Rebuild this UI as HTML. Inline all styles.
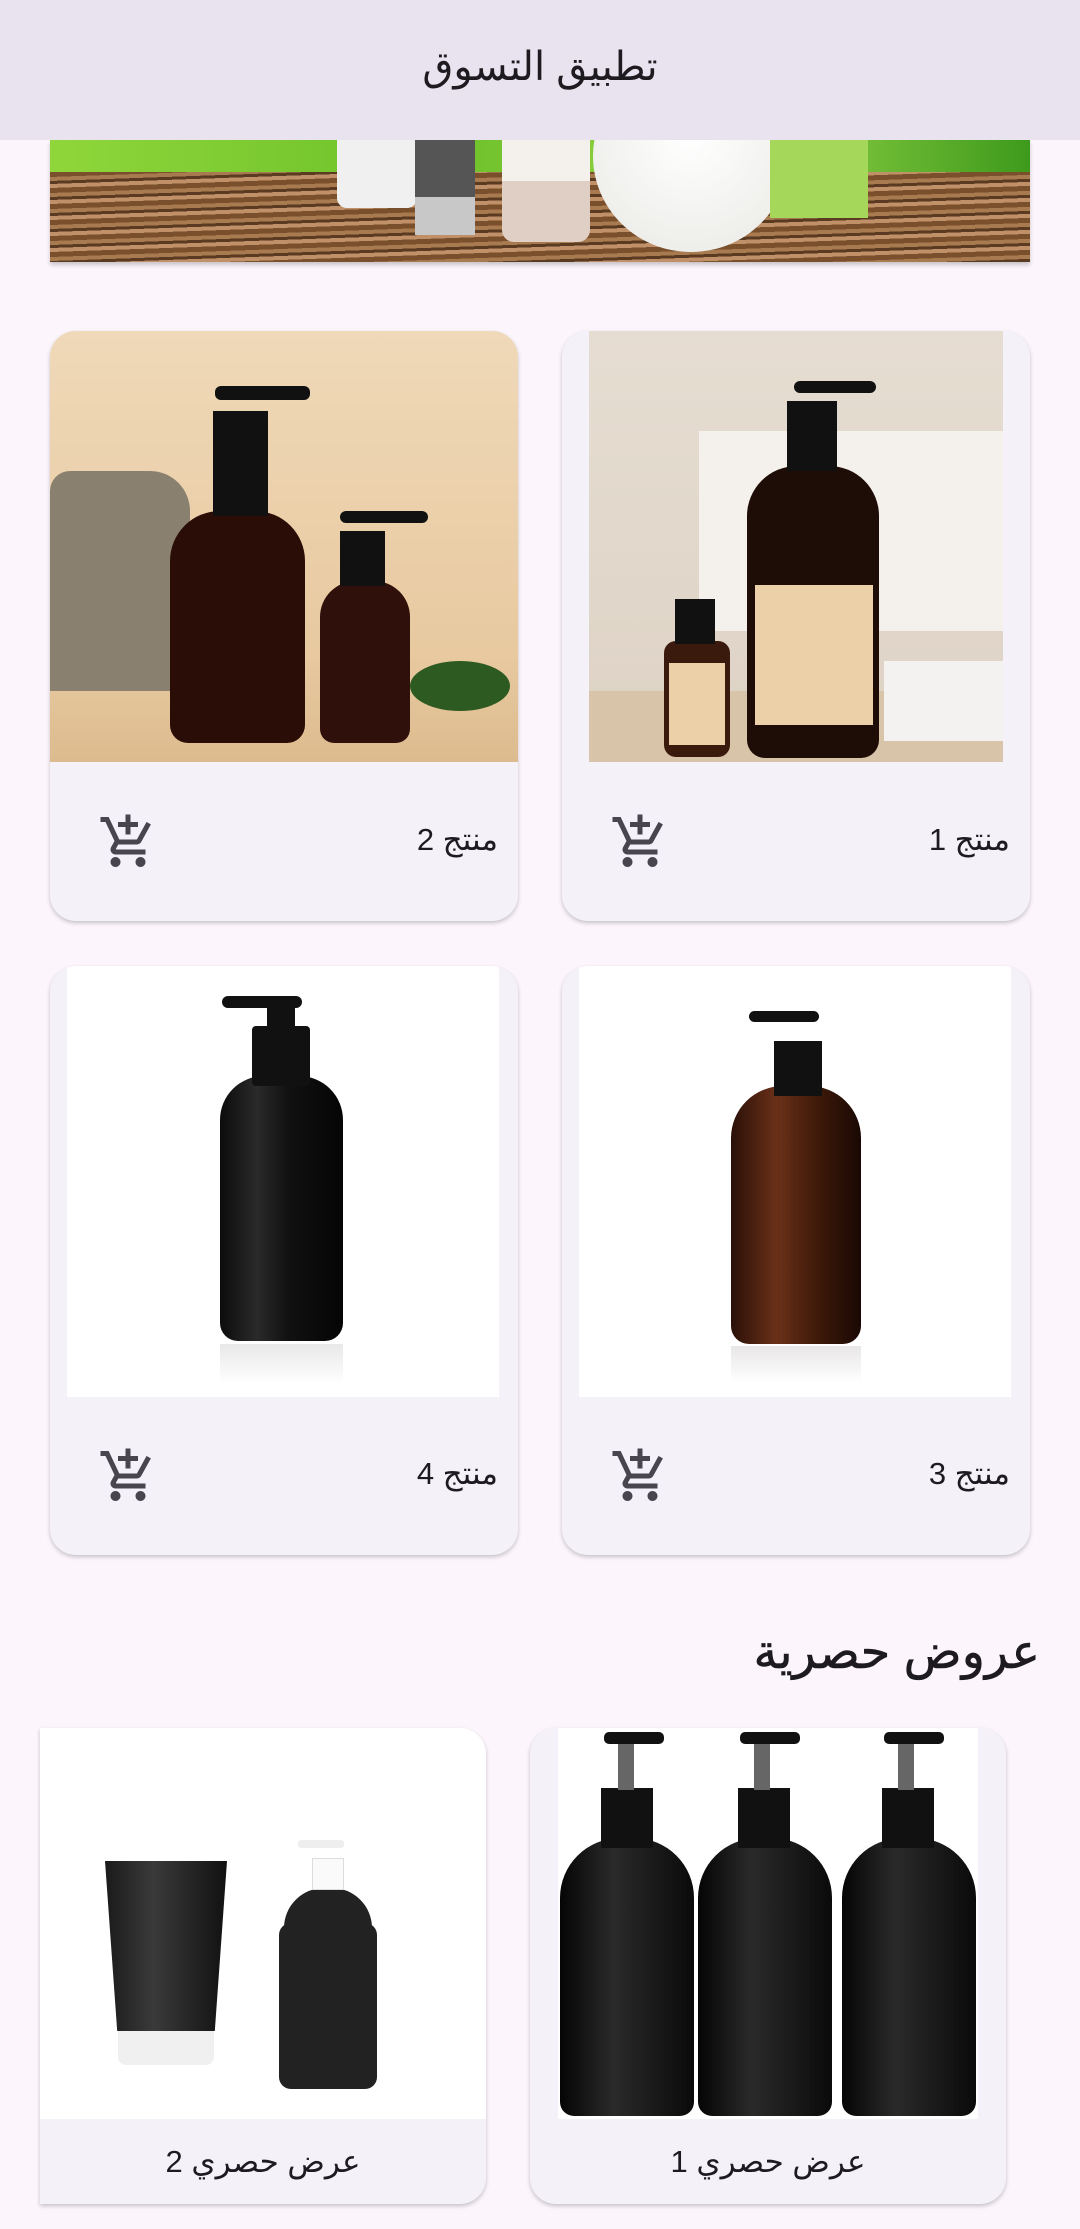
<!DOCTYPE html>
<html><head><meta charset="utf-8"><style>
*{margin:0;padding:0;box-sizing:border-box}
body{width:1080px;height:2229px;background:#fcf6fc;font-family:"Liberation Sans","DejaVu Sans",sans-serif;position:relative;overflow:hidden;color:#1d1b20}
.abs{position:absolute}
.hdr{left:0;top:0;width:1080px;height:140px;background:#e8e3ef;z-index:3}
.hdr span{position:absolute;left:0;right:0;top:44px;text-align:center;font-size:40px}
.card{background:#f4f1f8;border-radius:26px;box-shadow:0 2px 4px rgba(0,0,0,.22);overflow:hidden}
.lbl{font-size:31px;direction:rtl}
</style></head><body>
<div class="abs hdr"><span>تطبيق التسوق</span></div>
<!-- banner -->
<div class="abs" style="left:50px;top:140px;width:980px;height:122px;overflow:hidden;box-shadow:0 3px 4px rgba(0,0,0,.2)">
 <div class="abs" style="left:0;top:0;width:980px;height:32px;background:linear-gradient(90deg,#8fd63a,#6cc02a 40%,#9bd84a 70%,#3e9a1c)"></div>
 <div class="abs" style="left:0;top:32px;width:980px;height:90px;background:repeating-linear-gradient(178deg,#7a4f2c 0 5px,#a87a50 5px 9px,#5a3a20 9px 12px,#c09068 12px 16px)"></div>
 <div class="abs" style="left:287px;top:0;width:80px;height:68px;background:#f0f0f0;border-radius:0 0 10px 10px"></div>
 <div class="abs" style="left:365px;top:0;width:60px;height:95px;background:linear-gradient(#555 60%,#c8c8c8 60%)"></div>
 <div class="abs" style="left:452px;top:0;width:88px;height:102px;background:linear-gradient(#f4f0ec 40%,#e0cfc4 40%);border-radius:0 0 12px 12px"></div>
 <div class="abs" style="left:543px;top:-80px;width:196px;height:192px;background:radial-gradient(circle at 50% 40%,#fff,#e8e8e4);border-radius:50%"></div>
 <div class="abs" style="left:720px;top:0;width:98px;height:78px;background:#a5d85a"></div>
</div>
<!-- row1 -->
<div class="abs card" style="left:50px;top:331px;width:468px;height:590px">
 <div class="abs" style="left:0;top:0;width:468px;height:431px;background:linear-gradient(#efd9b8,#e8c9a0 75%,#dcbb8e)">
  <div class="abs" style="left:0;top:140px;width:140px;height:220px;background:#8a8070;border-radius:20px 40px 0 0"></div>
  <div class="abs" style="left:120px;top:180px;width:135px;height:232px;background:#2a0d06;border-radius:50px 50px 18px 18px"></div>
  <div class="abs" style="left:163px;top:80px;width:55px;height:105px;background:#111"></div>
  <div class="abs" style="left:165px;top:55px;width:95px;height:14px;background:#111;border-radius:6px"></div>
  <div class="abs" style="left:270px;top:250px;width:90px;height:162px;background:#30100a;border-radius:36px 36px 14px 14px"></div>
  <div class="abs" style="left:290px;top:200px;width:45px;height:55px;background:#111"></div>
  <div class="abs" style="left:290px;top:180px;width:88px;height:12px;background:#111;border-radius:6px"></div>
  <div class="abs" style="left:360px;top:330px;width:100px;height:50px;background:#2d5a20;border-radius:50%"></div>
 </div>
 <div class="abs lbl" style="right:20px;top:491px">منتج 2</div>
 <svg class="abs" style="left:48px;top:481px" width="60" height="60" viewBox="0 0 24 24"><path fill="#49454f" d="M11 9h2V6h3V4h-3V1h-2v3H8v2h3v3zm-4 9c-1.1 0-1.99.9-1.99 2S5.9 22 7 22s2-.9 2-2-.9-2-2-2zm10 0c-1.1 0-1.99.9-1.99 2s.89 2 1.99 2 2-.9 2-2-.9-2-2-2zm-9.83-3.25l.03-.12.9-1.63h7.45c.75 0 1.41-.41 1.75-1.03l3.86-7.01L19.42 4h-.01l-1.1 2-2.76 5H8.53l-.13-.27L6.16 6l-.95-2-.94-2H1v2h2l3.6 7.59-1.35 2.45c-.16.28-.25.61-.25.96 0 1.1.9 2 2 2h12v-2H7.42c-.13 0-.25-.11-.25-.25z"/></svg>
</div>
<div class="abs card" style="left:562px;top:331px;width:468px;height:590px">
 <div class="abs" style="left:27px;top:0;width:414px;height:431px;background:linear-gradient(#e6ddd2,#ddd2c4)">
  <div class="abs" style="left:110px;top:100px;width:304px;height:200px;background:#f4f0ec"></div>
  <div class="abs" style="left:0;top:360px;width:414px;height:71px;background:#d8c4a8"></div>
  <div class="abs" style="left:295px;top:330px;width:119px;height:80px;background:#f4f2f0"></div>
  <div class="abs" style="left:158px;top:135px;width:132px;height:292px;background:#1e0c06;border-radius:50px 50px 18px 18px"></div>
  <div class="abs" style="left:166px;top:254px;width:118px;height:140px;background:#ecd1a8"></div>
  <div class="abs" style="left:198px;top:70px;width:50px;height:70px;background:#111"></div>
  <div class="abs" style="left:205px;top:50px;width:82px;height:12px;background:#111;border-radius:6px"></div>
  <div class="abs" style="left:75px;top:310px;width:66px;height:116px;background:#3a1a0c;border-radius:12px"></div>
  <div class="abs" style="left:80px;top:332px;width:56px;height:82px;background:#ecd1a8"></div>
  <div class="abs" style="left:86px;top:268px;width:40px;height:45px;background:#111"></div>
 </div>
 <div class="abs lbl" style="right:20px;top:491px">منتج 1</div>
 <svg class="abs" style="left:48px;top:481px" width="60" height="60" viewBox="0 0 24 24"><path fill="#49454f" d="M11 9h2V6h3V4h-3V1h-2v3H8v2h3v3zm-4 9c-1.1 0-1.99.9-1.99 2S5.9 22 7 22s2-.9 2-2-.9-2-2-2zm10 0c-1.1 0-1.99.9-1.99 2s.89 2 1.99 2 2-.9 2-2-.9-2-2-2zm-9.83-3.25l.03-.12.9-1.63h7.45c.75 0 1.41-.41 1.75-1.03l3.86-7.01L19.42 4h-.01l-1.1 2-2.76 5H8.53l-.13-.27L6.16 6l-.95-2-.94-2H1v2h2l3.6 7.59-1.35 2.45c-.16.28-.25.61-.25.96 0 1.1.9 2 2 2h12v-2H7.42c-.13 0-.25-.11-.25-.25z"/></svg>
</div>
<!-- row2 -->
<div class="abs card" style="left:50px;top:966px;width:468px;height:589px">
 <div class="abs" style="left:17px;top:0;width:432px;height:431px;background:#fff">
  <div class="abs" style="left:153px;top:110px;width:123px;height:265px;background:linear-gradient(90deg,#0c0c0c,#2a2a2a 30%,#111 55%,#050505);border-radius:44px 44px 18px 18px"></div>
  <div class="abs" style="left:185px;top:60px;width:58px;height:60px;background:#111;border-radius:4px"></div>
  <div class="abs" style="left:200px;top:35px;width:28px;height:30px;background:#111"></div>
  <div class="abs" style="left:155px;top:30px;width:80px;height:12px;background:#111;border-radius:6px"></div>
  <div class="abs" style="left:153px;top:378px;width:123px;height:40px;background:linear-gradient(#e8e8e8,#fff)"></div>
 </div>
 <div class="abs lbl" style="right:20px;top:490px">منتج 4</div>
 <svg class="abs" style="left:48px;top:480px" width="60" height="60" viewBox="0 0 24 24"><path fill="#49454f" d="M11 9h2V6h3V4h-3V1h-2v3H8v2h3v3zm-4 9c-1.1 0-1.99.9-1.99 2S5.9 22 7 22s2-.9 2-2-.9-2-2-2zm10 0c-1.1 0-1.99.9-1.99 2s.89 2 1.99 2 2-.9 2-2-.9-2-2-2zm-9.83-3.25l.03-.12.9-1.63h7.45c.75 0 1.41-.41 1.75-1.03l3.86-7.01L19.42 4h-.01l-1.1 2-2.76 5H8.53l-.13-.27L6.16 6l-.95-2-.94-2H1v2h2l3.6 7.59-1.35 2.45c-.16.28-.25.61-.25.96 0 1.1.9 2 2 2h12v-2H7.42c-.13 0-.25-.11-.25-.25z"/></svg>
</div>
<div class="abs card" style="left:562px;top:966px;width:468px;height:589px">
 <div class="abs" style="left:17px;top:0;width:432px;height:431px;background:#fff">
  <div class="abs" style="left:152px;top:120px;width:130px;height:258px;background:linear-gradient(90deg,#2a1008,#6a3018 35%,#3a1808 70%,#1a0804);border-radius:52px 52px 18px 18px"></div>
  <div class="abs" style="left:195px;top:75px;width:48px;height:55px;background:#111"></div>
  <div class="abs" style="left:170px;top:45px;width:70px;height:11px;background:#111;border-radius:6px"></div>
  <div class="abs" style="left:152px;top:380px;width:130px;height:36px;background:linear-gradient(#e8e6e6,#fff)"></div>
 </div>
 <div class="abs lbl" style="right:20px;top:490px">منتج 3</div>
 <svg class="abs" style="left:48px;top:480px" width="60" height="60" viewBox="0 0 24 24"><path fill="#49454f" d="M11 9h2V6h3V4h-3V1h-2v3H8v2h3v3zm-4 9c-1.1 0-1.99.9-1.99 2S5.9 22 7 22s2-.9 2-2-.9-2-2-2zm10 0c-1.1 0-1.99.9-1.99 2s.89 2 1.99 2 2-.9 2-2-.9-2-2-2zm-9.83-3.25l.03-.12.9-1.63h7.45c.75 0 1.41-.41 1.75-1.03l3.86-7.01L19.42 4h-.01l-1.1 2-2.76 5H8.53l-.13-.27L6.16 6l-.95-2-.94-2H1v2h2l3.6 7.59-1.35 2.45c-.16.28-.25.61-.25.96 0 1.1.9 2 2 2h12v-2H7.42c-.13 0-.25-.11-.25-.25z"/></svg>
</div>
<!-- offers -->
<div class="abs" style="right:40px;top:1624px;font-size:48px;direction:rtl;color:#1d1b20;-webkit-text-stroke:0.6px #1d1b20">عروض حصرية</div>
<div class="abs card" style="left:40px;top:1728px;width:446px;height:476px;border-radius:0 26px 26px 0">
 <div class="abs" style="left:0;top:0;width:446px;height:391px;background:#fff">
  <div class="abs" style="left:65px;top:133px;width:122px;height:170px;background:linear-gradient(90deg,#1a1a1a,#3a3a3a 40%,#111);clip-path:polygon(0 0,100% 0,90% 100%,10% 100%)"></div>
  <div class="abs" style="left:78px;top:303px;width:96px;height:34px;background:#f0f0f0;border-radius:0 0 8px 8px"></div>
  <div class="abs" style="left:239px;top:195px;width:98px;height:166px;background:#222;border-radius:12px"></div>
  <div class="abs" style="left:244px;top:160px;width:88px;height:80px;background:#222;border-radius:40px 40px 10px 10px"></div>
  <div class="abs" style="left:272px;top:130px;width:32px;height:32px;background:#fafafa;border:1px solid #ddd"></div>
  <div class="abs" style="left:258px;top:112px;width:46px;height:8px;background:#eee;border-radius:3px"></div>
 </div>
 <div class="abs lbl" style="left:0;width:446px;text-align:center;top:416px">عرض حصري 2</div>
</div>
<div class="abs card" style="left:530px;top:1728px;width:476px;height:476px">
 <div class="abs" style="left:28px;top:0;width:420px;height:391px;background:#fff">
  <div class="abs" style="left:2px;top:110px;width:134px;height:278px;background:linear-gradient(90deg,#050505,#2a2a2a 40%,#0a0a0a);border-radius:60px 60px 14px 14px"></div>
  <div class="abs" style="left:140px;top:110px;width:134px;height:278px;background:linear-gradient(90deg,#050505,#2a2a2a 40%,#0a0a0a);border-radius:60px 60px 14px 14px"></div>
  <div class="abs" style="left:284px;top:110px;width:134px;height:278px;background:linear-gradient(90deg,#050505,#2a2a2a 40%,#0a0a0a);border-radius:60px 60px 14px 14px"></div>
  <div class="abs" style="left:43px;top:60px;width:52px;height:60px;background:#111"></div>
  <div class="abs" style="left:180px;top:60px;width:52px;height:60px;background:#111"></div>
  <div class="abs" style="left:324px;top:60px;width:52px;height:60px;background:#111"></div>
  <div class="abs" style="left:60px;top:14px;width:16px;height:48px;background:#666"></div>
  <div class="abs" style="left:196px;top:14px;width:16px;height:48px;background:#666"></div>
  <div class="abs" style="left:340px;top:14px;width:16px;height:48px;background:#666"></div>
  <div class="abs" style="left:46px;top:4px;width:60px;height:12px;background:#111;border-radius:5px"></div>
  <div class="abs" style="left:182px;top:4px;width:60px;height:12px;background:#111;border-radius:5px"></div>
  <div class="abs" style="left:326px;top:4px;width:60px;height:12px;background:#111;border-radius:5px"></div>
 </div>
 <div class="abs lbl" style="left:0;width:476px;text-align:center;top:416px">عرض حصري 1</div>
</div>
</body></html>
